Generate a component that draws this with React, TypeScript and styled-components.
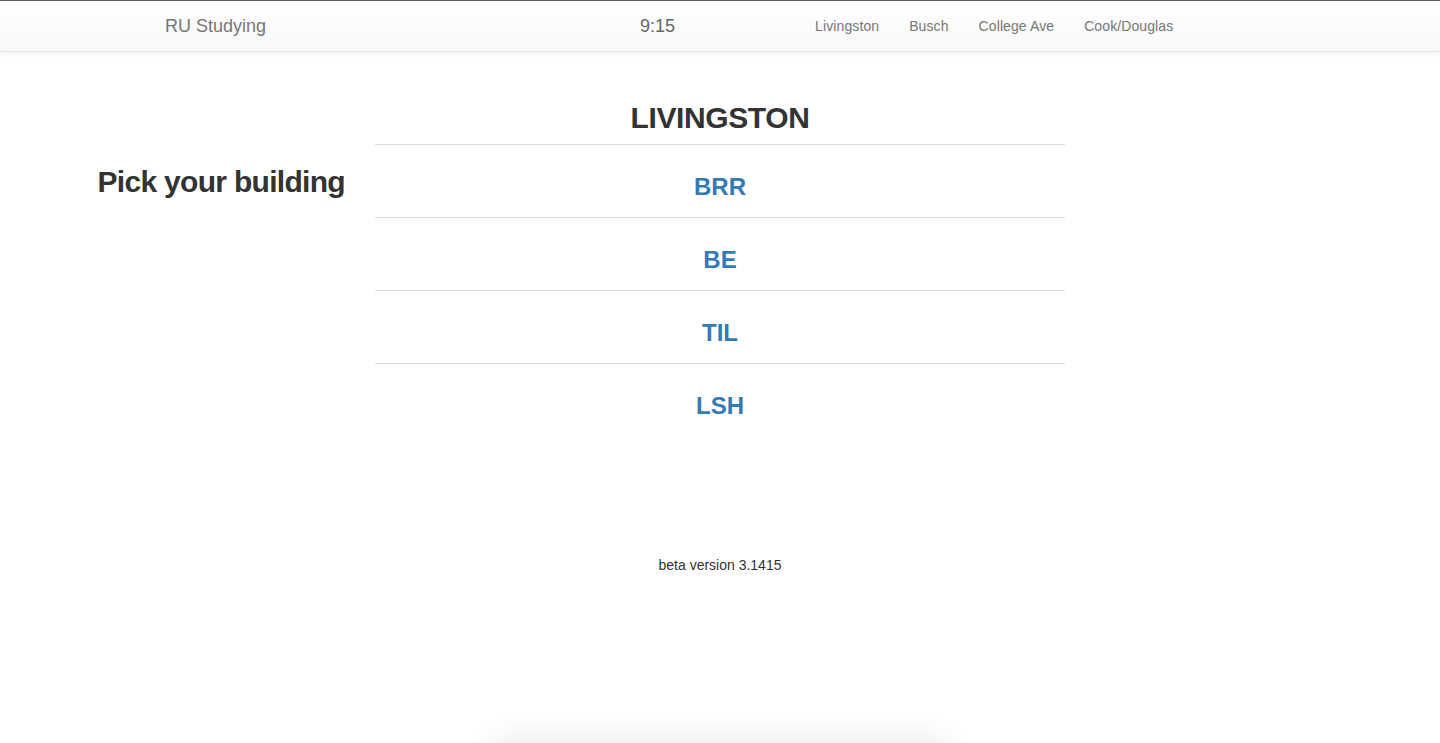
import React from 'react';
import styled, { createGlobalStyle } from 'styled-components';

const buildings = ['BRR', 'BE', 'TIL', 'LSH'];
const campuses = ['Livingston', 'Busch', 'College Ave', 'Cook/Douglas'];

const App: React.FC = () => {
  return (
    <>
      <GlobalStyle />
      <Page>
        <Navbar>
          <NavContainer>
            <Brand href="#">RU Studying</Brand>
            <Clock>9:15</Clock>
            <NavList>
              {campuses.map((c) => (
                <NavItem key={c}>
                  <NavLink href="#">{c}</NavLink>
                </NavItem>
              ))}
            </NavList>
          </NavContainer>
        </Navbar>
        <Row>
          <SideCol>
            <SideTitle>Pick your building</SideTitle>
          </SideCol>
          <MainCol>
            <CampusTitle>LIVINGSTON</CampusTitle>
            <Table>
              <tbody>
                {buildings.map((b) => (
                  <tr key={b}>
                    <Cell>
                      <BuildingLink href="#">{b}</BuildingLink>
                    </Cell>
                  </tr>
                ))}
              </tbody>
            </Table>
          </MainCol>
        </Row>
        <Footer>beta version 3.1415</Footer>
        <DockShadow />
      </Page>
    </>
  );
};

const GlobalStyle = createGlobalStyle`
  html, body {
    margin: 0;
    padding: 0;
    background: #fff;
  }
  body {
    font-family: "Liberation Sans", Arial, Helvetica, sans-serif;
    font-size: 14px;
    line-height: 1.42857;
    color: #333;
    border-top: 1px solid #5c5c5c;
    overflow: hidden;
  }
  * {
    box-sizing: border-box;
  }
`;

const Page = styled.div`
  min-height: 742px;
`;

const Navbar = styled.nav`
  height: 51px;
  background-image: linear-gradient(to bottom, #fff 0, #f8f8f8 100%);
  border-bottom: 1px solid #e7e7e7;
  box-shadow: inset 0 1px 0 rgba(255, 255, 255, 0.15), 0 1px 5px rgba(0, 0, 0, 0.075);
`;

const NavContainer = styled.div`
  width: 1170px;
  margin: 0 auto;
  padding: 0 15px;
  display: flex;
  align-items: center;
  height: 50px;
`;

const Brand = styled.a`
  padding: 15px;
  font-size: 18px;
  line-height: 20px;
  color: #777;
  text-decoration: none;
`;

const Clock = styled.span`
  margin-left: 344px;
  padding: 15px;
  font-size: 18px;
  line-height: 20px;
  color: #666;
`;

const NavList = styled.ul`
  display: flex;
  list-style: none;
  margin: 0 0 0 110px;
  padding: 0;
`;

const NavItem = styled.li`
  display: block;
`;

const NavLink = styled.a`
  display: block;
  padding: 15px;
  line-height: 20px;
  font-size: 14px;
  letter-spacing: 0.1px;
  color: #777;
  text-decoration: none;
`;

const Row = styled.div`
  display: grid;
  grid-template-columns: 360px 720px;
  margin-top: 29px;
`;

const SideCol = styled.div`
  padding: 0 15px;
  text-align: right;
`;

const SideTitle = styled.h2`
  margin: 84px 0 0;
  font-size: 30px;
  font-weight: 700;
  letter-spacing: -0.7px;
  line-height: 1.1;
`;

const MainCol = styled.div`
  padding: 0 15px;
`;

const CampusTitle = styled.h2`
  margin: 20px 0 10px;
  font-size: 30px;
  font-weight: 700;
  letter-spacing: -0.4px;
  line-height: 1.1;
  text-align: center;
`;

const Table = styled.table`
  width: 100%;
  border-collapse: collapse;
  border-spacing: 0;
  margin-bottom: 20px;
`;

const Cell = styled.td`
  padding: 8px;
  border-top: 1px solid #ddd;
  text-align: center;
  vertical-align: top;
`;

const BuildingLink = styled.a`
  display: block;
  margin: 21px 0 9px;
  font-size: 24px;
  font-weight: 700;
  line-height: 26px;
  color: #337ab7;
  text-decoration: none;
`;

const Footer = styled.p`
  margin: 99px 0 0;
  text-align: center;
  font-size: 14px;
  line-height: 20px;
  color: #333;
`;

const DockShadow = styled.div`
  position: fixed;
  left: 50%;
  bottom: -46px;
  width: 440px;
  height: 40px;
  transform: translateX(-50%);
  border-radius: 20px;
  background: rgba(0, 0, 0, 0.06);
  box-shadow: 0 0 30px 14px rgba(0, 0, 0, 0.07);
  pointer-events: none;
`;

export default App;
